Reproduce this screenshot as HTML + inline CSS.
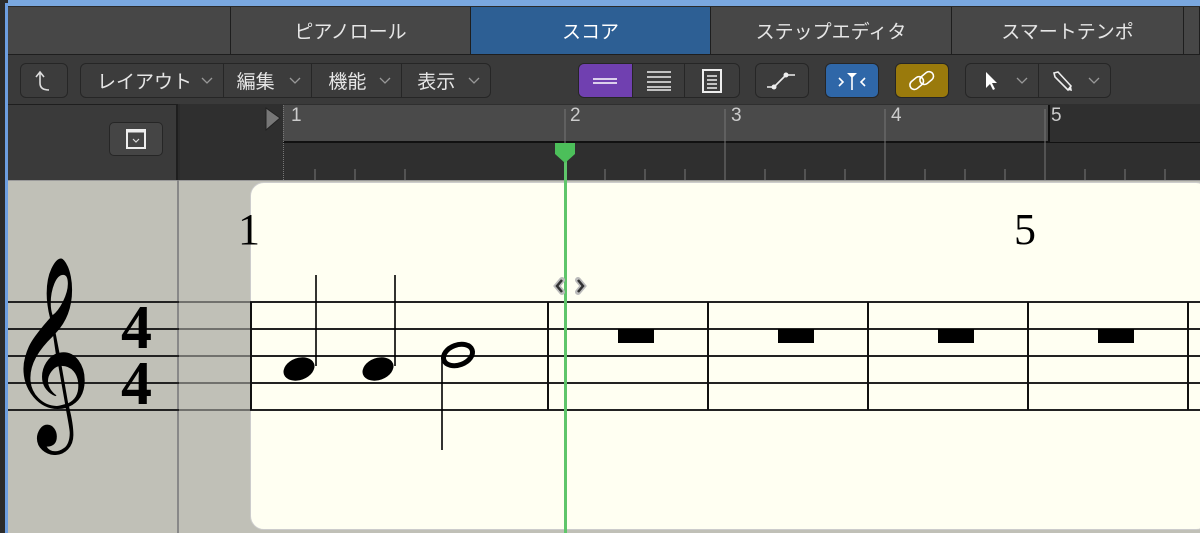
<!DOCTYPE html>
<html><head><meta charset="utf-8"><style>
*{margin:0;padding:0;box-sizing:border-box}
body{width:1200px;height:533px;overflow:hidden;background:#2b2b2b;position:relative;font-family:"Liberation Sans","Noto Sans CJK JP",sans-serif}
.a{position:absolute}
.tab{position:absolute;top:7px;height:47px;background:#474747;border-right:1px solid #1e1e1e;color:#e6e6e6;font-size:19px;display:flex;align-items:center;justify-content:center}
.btn{position:absolute;top:63px;height:35px;background:#3c3c3c;border:1px solid #262626;border-radius:6px;color:#e6e6e6;font-size:19px;display:flex;align-items:center}
.seg{height:100%;display:flex;align-items:center;justify-content:space-between;padding:0 10px 0 14px;border-right:1px solid #262626}
.sl{position:absolute;height:2px;background:#111}
.rl{position:absolute;top:105px;color:#ccc;font-size:19px}
</style></head><body>
<div class="a" style="left:0;top:0;width:1200px;height:6px;background:#7aa8e0"></div>
<div class="a" style="left:0;top:0;width:8px;height:533px;background:#2b2b2b"></div>
<div class="a" style="left:5px;top:3px;width:3px;height:530px;background:#6d9ee0"></div>
<div class="tab" style="left:8px;width:223px"></div>
<div class="tab" style="left:231px;width:240px">ピアノロール</div>
<div class="tab" style="left:471px;width:240px;background:#2d5f94;color:#fff">スコア</div>
<div class="tab" style="left:711px;width:241px">ステップエディタ</div>
<div class="tab" style="left:952px;width:232px">スマートテンポ</div>
<div class="tab" style="left:1184px;width:16px"></div>
<div class="a" style="left:8px;top:54px;width:1192px;height:50px;background:#3a3a3a;border-top:1px solid #1e1e1e"></div>
<div class="btn" style="left:20px;width:48px;justify-content:center"><svg width="20" height="24" viewBox="0 0 20 24"><path d="M6 4 L6 14 Q6 21 15 21 M2 8 L6 3 L10 8" fill="none" stroke="#ddd" stroke-width="1.6"/></svg></div>
<div class="btn" style="left:80px;width:411px">
<div class="seg" style="width:143px;padding-left:16px">レイアウト<svg width="12" height="8"><path d="M1 1L6 6L11 1" fill="none" stroke="#999" stroke-width="1.3"/></svg></div>
<div class="seg" style="width:89px;padding-left:13px">編集<svg width="12" height="8"><path d="M1 1L6 6L11 1" fill="none" stroke="#999" stroke-width="1.3"/></svg></div>
<div class="seg" style="width:90px;padding-left:16px">機能<svg width="12" height="8"><path d="M1 1L6 6L11 1" fill="none" stroke="#999" stroke-width="1.3"/></svg></div>
<div class="seg" style="width:88px;border:none;padding-left:15px">表示<svg width="12" height="8"><path d="M1 1L6 6L11 1" fill="none" stroke="#999" stroke-width="1.3"/></svg></div></div>
<div class="btn" style="left:578px;width:162px;overflow:hidden">
<div style="width:53px;height:100%;background:#7040b0;display:flex;align-items:center;justify-content:center"><svg width="26" height="10"><path d="M1 3H25M1 7H25" stroke="#fff" stroke-width="1.5"/></svg></div>
<div style="width:54px;height:100%;border-left:1px solid #262626;border-right:1px solid #262626;display:flex;align-items:center;justify-content:center"><svg width="26" height="22"><path d="M1 2H25M1 7H25M1 12H25M1 17H25M1 20H25" stroke="#eee" stroke-width="1.4"/></svg></div>
<div style="width:54px;height:100%;display:flex;align-items:center;justify-content:center"><svg width="22" height="24"><rect x="2" y="1" width="18" height="22" fill="none" stroke="#eee" stroke-width="2"/><path d="M6 7H16M6 11H16M6 15H16M6 19H16" stroke="#eee" stroke-width="1.4"/></svg></div></div>
<div class="btn" style="left:755px;width:54px;justify-content:center"><svg width="34" height="24"><path d="M2 18H8M10 17L20 7M22 6H30" stroke="#eee" stroke-width="1.6"/><circle cx="9" cy="18" r="2.5" fill="#eee"/><circle cx="21" cy="6" r="2.5" fill="#eee"/></svg></div>
<div class="btn" style="left:825px;width:54px;justify-content:center;background:#2f67a8"><svg width="34" height="24"><path d="M4 9L8 13L4 17M30 9L26 13L30 17M17 7V21" stroke="#fff" stroke-width="1.6" fill="none"/><path d="M12 4H22L17 9Z" fill="#fff"/></svg></div>
<div class="btn" style="left:895px;width:54px;justify-content:center;background:#9a7a0c"><svg width="34" height="26"><rect x="4" y="11" width="15" height="9" rx="4.5" transform="rotate(-40 11 15)" fill="none" stroke="#fff" stroke-width="1.6"/><rect x="14" y="6" width="15" height="9" rx="4.5" transform="rotate(-40 21 10)" fill="none" stroke="#fff" stroke-width="1.6"/></svg></div>
<div class="btn" style="left:965px;width:146px">
<div class="seg" style="width:73px;padding-left:18px"><svg width="14" height="20"><path d="M2 1V17L6 13L9 19L11 18L8 12H13Z" fill="#fff"/></svg><svg width="12" height="8"><path d="M1 1L6 6L11 1" fill="none" stroke="#999" stroke-width="1.3"/></svg></div>
<div class="seg" style="width:72px;border:none;padding-left:12px"><svg width="22" height="22"><path d="M3 3L7 2L20 16L17 20L4 7Z" fill="none" stroke="#eee" stroke-width="1.6"/><path d="M17 20L20 16L21 21Z" fill="#eee"/></svg><svg width="12" height="8"><path d="M1 1L6 6L11 1" fill="none" stroke="#999" stroke-width="1.3"/></svg></div></div>
<div class="a" style="left:8px;top:104px;width:170px;height:76px;background:#3a3a3a;border-top:1px solid #1e1e1e;border-right:2px solid #1e1e1e"></div>
<div class="a" style="left:109px;top:122px;width:54px;height:34px;background:#454545;border:1px solid #262626;border-radius:5px;display:flex;align-items:center;justify-content:center"><svg width="20" height="20"><rect x="1" y="1" width="18" height="18" fill="none" stroke="#eee" stroke-width="2"/><path d="M1 2H19" stroke="#eee" stroke-width="3"/><path d="M7 10L10 13L13 10" fill="none" stroke="#ddd" stroke-width="1.2"/></svg></div>
<div class="a" style="left:180px;top:104px;width:1020px;height:76px;background:#2f2f2f"></div>
<div class="a" style="left:283px;top:105px;width:767px;height:37px;background:#4a4a4a;border-bottom:1px solid #111"></div>
<div class="a" style="left:1048px;top:105px;width:2px;height:37px;background:#111"></div>
<div class="a" style="left:283px;top:142px;width:917px;height:1px;background:#111"></div>
<svg class="a" style="left:262px;top:104px" width="20" height="30"><path d="M4 4L18 14L4 26Z" fill="#777" stroke="#222"/></svg>
<div class="a" style="left:283px;top:105px;height:75px;border-left:1px dotted #777"></div>
<div class="rl" style="left:291px">1</div>
<div class="rl" style="left:570px">2</div>
<div class="rl" style="left:731px">3</div>
<div class="rl" style="left:891px">4</div>
<div class="rl" style="left:1051px">5</div>
<svg class="a" style="left:283px;top:104px" width="917" height="76">
<g stroke="#777" stroke-width="1">
<path d="M282 5V76M442 5V76M602 5V76M762 5V76"/>
<path d="M32 65V76M72 65V76M122 65V76M322 65V76M362 65V76M402 65V76M482 65V76M522 65V76M562 65V76M642 65V76M682 65V76M722 65V76M802 65V76M842 65V76M882 65V76"/>
</g></svg>
<div class="a" style="left:8px;top:180px;width:1192px;height:353px;background:#c0c0b7;border-top:1px solid #999"></div>
<div class="a" style="left:177px;top:180px;width:2px;height:353px;background:#888"></div>
<div class="a" style="left:250px;top:182px;width:960px;height:348px;background:#fffff2;border-radius:14px;border:1px solid #ccc"></div>
<div class="sl" style="left:8px;top:301px;width:1192px;background:#222"></div>
<div class="sl" style="left:8px;top:328px;width:1192px;background:#222"></div>
<div class="sl" style="left:8px;top:355px;width:1192px;background:#222"></div>
<div class="sl" style="left:8px;top:382px;width:1192px;background:#222"></div>
<div class="sl" style="left:8px;top:409px;width:1192px;background:#222"></div>
<div class="a" style="left:179px;top:300px;width:71px;height:112px;background:rgba(192,192,183,.5)"></div>
<div class="a" style="left:250px;top:302px;width:2px;height:108px;background:#111"></div>
<div class="a" style="left:547px;top:302px;width:2px;height:108px;background:#111"></div>
<div class="a" style="left:707px;top:302px;width:2px;height:108px;background:#111"></div>
<div class="a" style="left:867px;top:302px;width:2px;height:108px;background:#111"></div>
<div class="a" style="left:1027px;top:302px;width:2px;height:108px;background:#111"></div>
<div class="a" style="left:1187px;top:302px;width:2px;height:108px;background:#111"></div>
<div class="a" style="left:6px;top:268px;font-family:'DejaVu Serif',serif;font-size:165px;line-height:1;color:#000;transform:scaleX(0.88);transform-origin:left top">𝄞</div>
<div class="a" style="left:121px;top:300px;font-family:'Liberation Serif',serif;font-weight:bold;font-size:62px;line-height:56px;color:#000">4<br>4</div>
<div class="a" style="left:238px;top:208px;font-family:'Liberation Serif',serif;font-size:44px;line-height:1;color:#000">1</div>
<div class="a" style="left:1014px;top:208px;font-family:'Liberation Serif',serif;font-size:44px;line-height:1;color:#000">5</div>
<svg class="a" style="left:270px;top:270px" width="220" height="185">
<ellipse cx="29" cy="99" rx="16" ry="11" transform="rotate(-20 29 99)" fill="#000"/>
<path d="M46 5V96" stroke="#000" stroke-width="1.6"/>
<ellipse cx="108" cy="99" rx="16" ry="11" transform="rotate(-20 108 99)" fill="#000"/>
<path d="M125 5V96" stroke="#000" stroke-width="1.6"/>
<ellipse cx="188" cy="85" rx="15" ry="10" transform="rotate(-20 188 85)" fill="none" stroke="#000" stroke-width="5"/>
<path d="M172 88V180" stroke="#000" stroke-width="1.6"/>
</svg>
<div class="a" style="left:618px;top:329px;width:36px;height:14px;background:#000"></div>
<div class="a" style="left:778px;top:329px;width:36px;height:14px;background:#000"></div>
<div class="a" style="left:938px;top:329px;width:36px;height:14px;background:#000"></div>
<div class="a" style="left:1098px;top:329px;width:36px;height:14px;background:#000"></div>
<div class="a" style="left:564px;top:150px;width:3px;height:383px;background:#5fc56a"></div>
<svg class="a" style="left:554px;top:142px" width="22" height="22"><path d="M1 1H21V12L11 21L1 12Z" fill="#4cbf5a"/></svg>
<svg class="a" style="left:550px;top:276px" width="42" height="20"><g fill="none" stroke="#bbb" stroke-width="6" stroke-linecap="round"><path d="M12 4L7 10L12 16M28 4L33 10L28 16"/></g><g fill="none" stroke="#333" stroke-width="2.5"><path d="M12 4L7 10L12 16M28 4L33 10L28 16"/></g></svg>
</body></html>
